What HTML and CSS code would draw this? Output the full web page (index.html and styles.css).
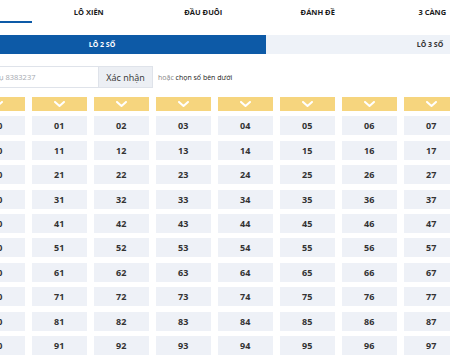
FILE: index.html
```html
<!DOCTYPE html>
<html lang="vi">

<head>
  <meta charset="UTF-8" />
  <title>Lô 2 số</title>
  <link rel="stylesheet" href="styles.css">
</head>

<body>
  <div class="tabs">
    <div class="tab active">LÔ 2 SỐ</div>
    <div class="tab">LÔ XIÊN</div>
    <div class="tab">ĐẦU ĐUÔI</div>
    <div class="tab">ĐÁNH ĐỀ</div>
    <div class="tab">3 CÀNG</div>
  </div>

  <div class="subtabs">
    <div class="subtab active">LÔ 2 SỐ</div>
    <div class="subtab">LÔ 3 SỐ</div>
  </div>

  <div class="pick">
    <input type="text" class="pick-input" placeholder="Ví dụ 8383237">
    <button class="pick-btn">Xác nhận</button>
    <span class="pick-hint"><span class="muted">hoặc</span> chọn số bên dưới</span>
  </div>

  <div class="board" id="board"></div>

  <script>
    var board = document.getElementById('board');
    var chevron = '<svg width="11" height="6" viewBox="0 0 11 6"><path d="M1 1l4.5 4 4.5-4" fill="none" stroke="#fff" stroke-width="2" stroke-linecap="round" stroke-linejoin="round"/></svg>';
    for (var c = 0; c < 10; c++) {
      var h = document.createElement('div');
      h.className = 'col-head';
      h.innerHTML = chevron;
      board.appendChild(h);
    }
    for (var r = 0; r < 10; r++) {
      for (var c = 0; c < 10; c++) {
        var cell = document.createElement('div');
        cell.className = 'num';
        cell.textContent = '' + r + c;
        board.appendChild(cell);
      }
    }
  </script>
</body>

</html>
```

FILE: styles.css
```css
body {
  margin: 0;
  background: #fff;
  font-family: 'Open Sans', 'Liberation Sans', sans-serif;
  color: #222;
  overflow: hidden;
}

.tabs {
  display: flex;
  margin-left: -83px;
  height: 35px;
}

.tab {
  flex: 0 0 114.5px;
  box-sizing: border-box;
  height: 23px;
  padding-top: 7px;
  text-align: center;
  font-size: 7.5px;
  font-weight: 700;
  line-height: 10px;
  color: #1a1a1a;
}

.tab.active {
  border-bottom: 2.5px solid #0d5aa7;
}

.subtabs {
  display: flex;
  margin-left: -62px;
  height: 19px;
}

.subtab {
  flex: 0 0 328px;
  background: #eef2f8;
  color: #333;
  font-size: 7px;
  font-weight: 700;
  line-height: 19px;
  text-align: center;
}

.subtab.active {
  background: #0d5aa7;
  color: #fff;
}

.pick {
  display: flex;
  align-items: center;
  margin: 12px 0 0 -31px;
  height: 22px;
}

.pick-input {
  width: 129px;
  height: 22px;
  box-sizing: border-box;
  border: 1px solid #dfe3ea;
  border-right: none;
  padding: 0 0 0 16px;
  font-family: inherit;
  font-size: 7.5px;
  outline: none;
}

.pick-input::placeholder {
  color: #a5a9b0;
}

.pick-btn {
  width: 55px;
  height: 22px;
  border: 1px solid #dfe3ea;
  background: #eceff4;
  color: #333;
  font-family: inherit;
  font-size: 9px;
  padding: 0;
}

.pick-hint {
  margin-left: 5px;
  font-size: 7px;
  color: #222;
}

.pick-hint .muted {
  color: #888;
}

.board {
  display: grid;
  grid-template-columns: repeat(10, 55.5px);
  grid-template-rows: 14px;
  grid-auto-rows: 19px;
  column-gap: 6.5px;
  row-gap: 5.4px;
  margin: 9px 0 0 -30.5px;
}

.col-head {
  background: #f6d57e;
  display: flex;
  align-items: center;
  justify-content: center;
}

.num {
  background: #eef1f7;
  color: #333;
  font-size: 9px;
  font-weight: 700;
  line-height: 19px;
  text-align: center;
}
```
